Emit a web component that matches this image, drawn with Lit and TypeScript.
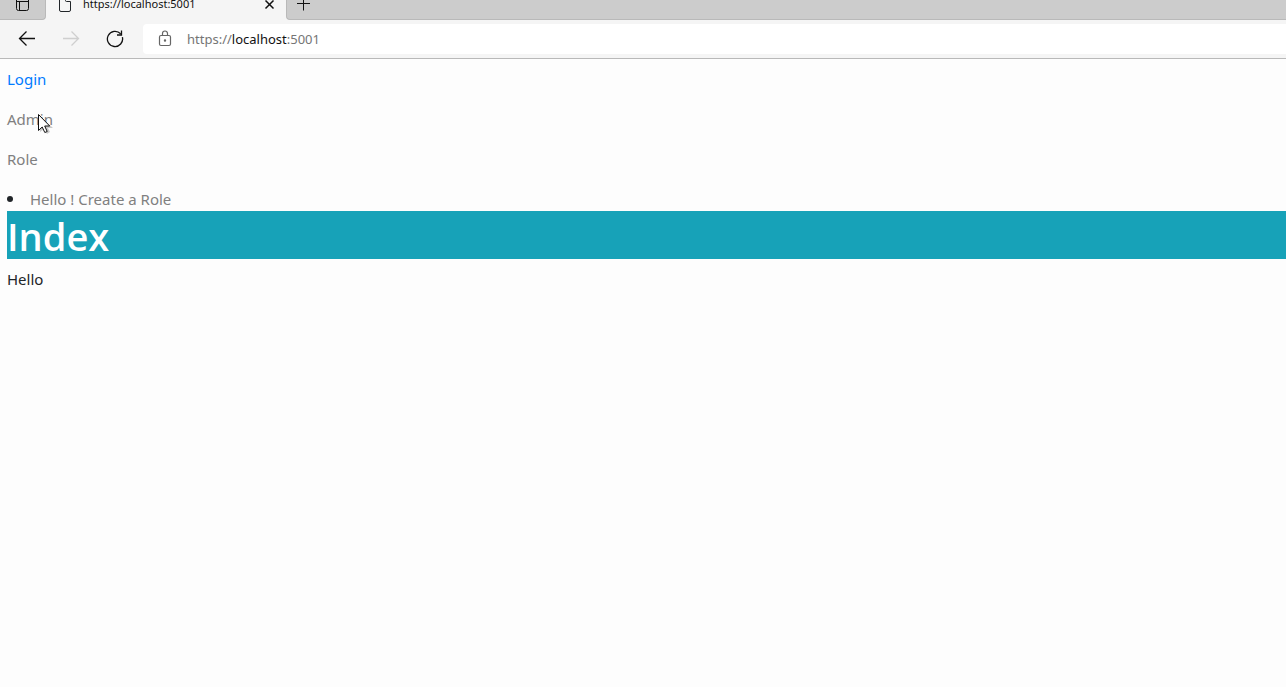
import { LitElement, html, css } from "lit";
import { customElement, state } from "lit/decorators.js";

@customElement("browser-chrome")
class BrowserChrome extends LitElement {
  @state() private editing = false;

  static styles = css`
    :host {
      display: block;
      background: #f5f5f5;
      border-bottom: 1px solid #b9b9b9;
      font-family: "Noto Sans", "Open Sans", sans-serif;
    }
    button {
      display: grid;
      place-items: center;
      padding: 0;
      border: 0;
      background: none;
      color: #111;
    }
    svg {
      display: block;
      fill: none;
      stroke: currentColor;
    }
    .tabs {
      display: flex;
      height: 20px;
    }
    .side {
      box-sizing: border-box;
      background: #cccccc;
      border: solid #b9b9b9;
      border-width: 0 0 1px;
    }
    .menu {
      width: 46px;
      border-right-width: 1px;
      border-bottom-right-radius: 4px;
    }
    .tab {
      display: flex;
      width: 240px;
      box-sizing: border-box;
      padding: 0 10px 0 12px;
    }
    .title {
      flex: 1;
      align-self: flex-end;
      padding: 0 0 8px 11px;
      font-size: 11px;
      line-height: 16px;
      color: #111;
      white-space: nowrap;
    }
    .rest {
      flex: 1;
      padding-left: 10px;
      border-left-width: 1px;
      border-bottom-left-radius: 4px;
    }
    .bar {
      display: flex;
      align-items: center;
      padding: 4px 0;
    }
    .nav {
      display: flex;
      gap: 26px;
      padding: 0 19px 0 18px;
    }
    .nav button:disabled {
      color: #cfcfcf;
    }
    .address {
      flex: 1;
      display: flex;
      align-items: center;
      height: 30px;
      background: #fff;
      border-radius: 4px 0 0 4px;
      padding-left: 14px;
      gap: 14px;
    }
    .lock {
      color: #666;
    }
    .field {
      flex: 1;
      display: grid;
      font-size: 13px;
      line-height: 20px;
      color: #757575;
    }
    .field > * {
      grid-area: 1 / 1;
    }
    .field b {
      font-weight: 400;
      color: #111;
    }
    input {
      border: 0;
      padding: 0;
      outline: 0;
      background: none;
      font: inherit;
      color: #111;
    }
  `;

  render() {
    return html`
      <div class="tabs">
        <button class="side menu" aria-label="Tab actions menu">
          <svg width="15" height="19" viewBox="0 0 15 19">
            <path d="M1.5 0V8.5a2 2 0 0 0 2 2h8a2 2 0 0 0 2-2V0M1 1.5h13M4.5 1.5v9" />
          </svg>
        </button>
        <div class="tab">
          <svg width="14" height="20" viewBox="0 0 14 20">
            <path d="M1.5-3v13a1.5 1.5 0 0 0 1.5 1.5h8a1.5 1.5 0 0 0 1.5-1.5V1.5h-4a1 1 0 0 1-1-1V-3" />
          </svg>
          <span class="title">https://localhost:5001</span>
          <button aria-label="Close tab">
            <svg width="14" height="20" viewBox="0 0 14 20" stroke-width="1.5">
              <path d="M3.5 0.5l8 8M11.5 0.5l-8 8" />
            </svg>
          </button>
        </div>
        <div class="side rest">
          <button aria-label="New tab">
            <svg width="14" height="19" viewBox="0 0 14 19">
              <path d="M0 3.5h13M6.5-3v13.5" />
            </svg>
          </button>
        </div>
      </div>
      <div class="bar">
        <div class="nav">
          <button aria-label="Back">
            <svg width="18" height="20" viewBox="0 0 18 20" stroke-width="1.3">
              <path d="M17 9.5H1.5M8.5 2.5l-7 7 7 7" />
            </svg>
          </button>
          <button aria-label="Forward" disabled>
            <svg width="18" height="20" viewBox="0 0 18 20" stroke-width="1.3">
              <path d="M1 9.5h15.5M9.5 2.5l7 7-7 7" />
            </svg>
          </button>
          <button aria-label="Refresh">
            <svg width="18" height="20" viewBox="0 0 18 20" stroke-width="1.3">
              <path d="M16.4 8.2A7.6 7.6 0 1 1 14.6 4.8M15.5 1.5v4.5h-4.5" />
            </svg>
          </button>
        </div>
        <div class="address">
          <svg class="lock" width="16" height="20" viewBox="0 0 16 20" stroke-width="1.2">
            <rect x="2.5" y="6.5" width="11" height="10" rx="1.5" />
            <path d="M5.5 6.5V4.5a2.5 2.5 0 0 1 5 0v2" />
            <circle cx="8" cy="11.5" r="0.6" fill="currentColor" />
          </svg>
          <div class="field">
            ${this.editing ? "" : html`<span>https://<b>localhost</b>:5001</span>`}
            <input
              type="text"
              aria-label="Address"
              .value=${this.editing ? "https://localhost:5001" : ""}
              @focus=${() => (this.editing = true)}
              @blur=${() => (this.editing = false)}
            />
          </div>
        </div>
      </div>
    `;
  }
}

@customElement("app-root")
class AppRoot extends LitElement {
  static styles = css`
    :host {
      display: block;
      min-height: 100vh;
      background: #fdfdfd;
      font-family: "Noto Sans", "Open Sans", sans-serif;
      font-size: 15px;
      line-height: 24px;
      color: #212529;
    }
    main {
      padding: 8px 0 0 7px;
    }
    p {
      margin: 0 0 16px;
    }
    a {
      color: #808080;
      text-decoration: none;
    }
    .login {
      color: #007bff;
    }
    .hover {
      position: relative;
    }
    .cursor {
      position: absolute;
      left: 30px;
      top: 6px;
    }
    ul {
      margin: 0;
      padding: 0;
      list-style: none;
    }
    li {
      display: flex;
      align-items: center;
      gap: 17px;
    }
    li::before {
      content: "";
      width: 6px;
      height: 6px;
      border-radius: 50%;
      background: #212529;
    }
    h1 {
      margin: 0 0 8px;
      background: #17a2b8;
      color: #fff;
      font-family: "Open Sans", "Noto Sans", sans-serif;
      font-size: 38px;
      line-height: 50px;
      height: 48px;
      font-weight: 600;
    }
  `;

  render() {
    return html`
      <browser-chrome></browser-chrome>
      <main>
        <p><a class="login" href="#login">Login</a></p>
        <p class="hover">
          <a href="#admin">Admin</a>
          <svg class="cursor" width="16" height="22" viewBox="0 0 16 22" aria-hidden="true">
            <path d="M3 3v16l4-3 3 5 3-2-2-4h5z" fill="#000" opacity="0.2" />
            <path d="M1.5 1.5v16l3.7-3.5 2.6 5.5 2.4-1-2.5-5.5h5z" fill="#fff" stroke="#111" />
          </svg>
        </p>
        <p><a href="#role">Role</a></p>
        <ul>
          <li><a href="#create-role">Hello ! Create a Role</a></li>
        </ul>
        <h1>Index</h1>
        <p>Hello</p>
      </main>
    `;
  }
}
